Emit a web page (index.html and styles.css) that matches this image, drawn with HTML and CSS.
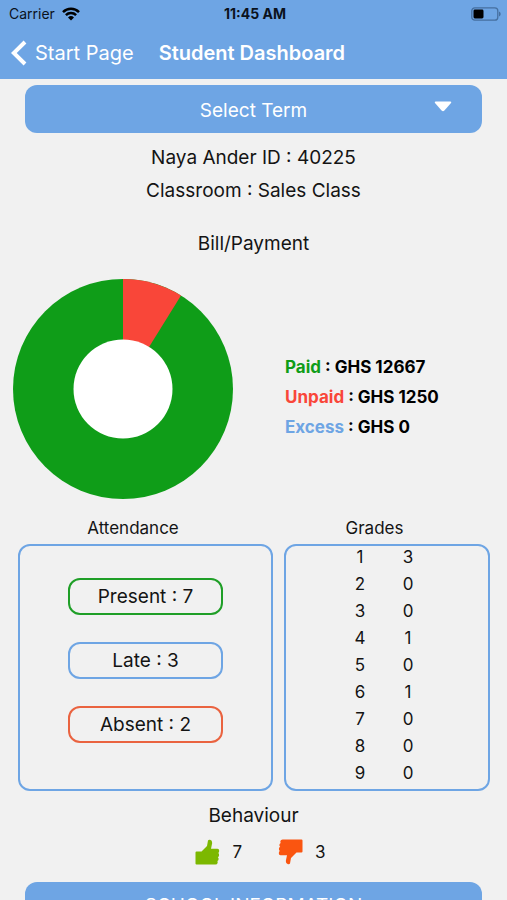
FILE: index.html
```html
<!DOCTYPE html>
<html lang="en">
<head>
<meta charset="utf-8">
<meta name="viewport" content="width=device-width, initial-scale=1">
<title>Student Dashboard</title>
<link rel="stylesheet" href="styles.css">
</head>
<body>
<div class="screen">
  <header class="top">
    <div class="status">
      <div class="carrier">
        <span>Carrier</span>
        <svg width="18" height="14" viewBox="0 0 18 14" aria-hidden="true">
          <g fill="none" stroke="#000" stroke-width="2.5">
            <path d="M1 5.1a11.3 11.3 0 0 1 16 0"/>
            <path d="M3.9 8.2a7.2 7.2 0 0 1 10.2 0"/>
          </g>
          <path d="M9 13.5 6 10.5a4.3 4.3 0 0 1 6 0z"/>
        </svg>
      </div>
      <time class="clock">11:45 AM</time>
      <svg class="battery" width="30" height="14" viewBox="0 0 30 14" aria-hidden="true">
        <rect x="0.8" y="0.8" width="26" height="12.4" rx="3" fill="none" stroke="#456f9f" stroke-width="1.3"/>
        <path d="M28 4.6c2.2.7 2.2 4.1 0 4.8z" fill="#456f9f"/>
        <rect x="2.5" y="2.6" width="10" height="8.8" rx="1.4"/>
      </svg>
    </div>
    <nav class="nav">
      <a class="back" href="#">
        <svg width="16" height="26" viewBox="0 0 16 26" aria-hidden="true"><path d="M14 2 2.8 13 14 24" fill="none" stroke="#fff" stroke-width="4"/></svg>
        <span>Start Page</span>
      </a>
      <h1 class="title">Student Dashboard</h1>
    </nav>
  </header>
  <main>
    <div class="term">
      <select class="term-select" aria-label="Select Term">
        <option>Select Term</option>
      </select>
      <svg class="caret" width="18" height="11" viewBox="0 0 18 11" aria-hidden="true"><path d="M1.600.5h14.800q1.500.3.6 1.600L10.400 9.500Q9 10.800 7.600 9.500L1 2.100Q.1.800 1.600.5z" fill="#fff"/></svg>
    </div>
    <section class="student">
      <p>Naya Ander ID : 40225</p>
      <p>Classroom : Sales Class</p>
    </section>
    <h2 class="heading">Bill/Payment</h2>
    <section class="bill">
      <svg class="donut" width="220" height="220" viewBox="0 0 220 220" role="img" aria-label="Bill payment chart">
        <circle cx="110" cy="110" r="110" fill="#0f9d18"/>
        <path d="M110 110V0a110 110 0 0 1 58 16.500z" fill="#f94639"/>
        <circle cx="110" cy="110" r="49.500" fill="#fff"/>
      </svg>
      <ul class="legend">
        <li><span class="paid">Paid</span> : GHS 12667</li>
        <li><span class="unpaid">Unpaid</span> : GHS 1250</li>
        <li><span class="excess">Excess</span> : GHS 0</li>
      </ul>
    </section>
    <div class="stats">
      <section class="stat">
        <h2 class="stat-title">Attendance</h2>
        <div class="panel attendance">
          <p class="pill present">Present : 7</p>
          <p class="pill late">Late : 3</p>
          <p class="pill absent">Absent : 2</p>
        </div>
      </section>
      <section class="stat">
        <h2 class="stat-title">Grades</h2>
        <div class="panel scores">
          <table class="grades" aria-label="Grades">
            <tbody>
              <tr><td>1</td><td>3</td></tr>
              <tr><td>2</td><td>0</td></tr>
              <tr><td>3</td><td>0</td></tr>
              <tr><td>4</td><td>1</td></tr>
              <tr><td>5</td><td>0</td></tr>
              <tr><td>6</td><td>1</td></tr>
              <tr><td>7</td><td>0</td></tr>
              <tr><td>8</td><td>0</td></tr>
              <tr><td>9</td><td>0</td></tr>
            </tbody>
          </table>
        </div>
      </section>
    </div>
    <h2 class="heading">Behaviour</h2>
    <div class="behaviour">
      <div class="vote">
        <svg width="25" height="26" viewBox="0 0 25 26" aria-hidden="true"><path d="M.5 13.500Q.5 12.500 1.500 12.500H6.500L12 7 13 1.500Q13.500.5 15 .7q2.300.4 2.200 3.300L16 9.800h6.500q1.700.2 1.700 2t-1 2.200q1 .6.900 2.200t-1.300 2q1 .6.800 2t-1.300 1.800q.6.700.3 1.900-.4 1.600-2.200 1.600H1.500q-1 0-1-1z" fill="#7cb800"/></svg>
        <span>7</span>
      </div>
      <div class="vote">
        <svg width="25" height="26" viewBox="0 0 25 26" aria-hidden="true"><path transform="rotate(180 12.500 13)" d="M.5 13.500Q.5 12.500 1.500 12.500H6.500L12 7 13 1.500Q13.500.5 15 .7q2.300.4 2.200 3.300L16 9.800h6.500q1.700.2 1.700 2t-1 2.200q1 .6.900 2.200t-1.300 2q1 .6.800 2t-1.300 1.800q.6.700.3 1.900-.4 1.600-2.200 1.600H1.500q-1 0-1-1z" fill="#fa5510"/></svg>
        <span>3</span>
      </div>
    </div>
    <button class="info" type="button">SCHOOL INFORMATION</button>
  </main>
</div>
</body>
</html>
```
FILE: styles.css
```css
* {
  box-sizing: border-box;
}

body,
h1,
h2,
p,
ul {
  margin: 0;
  padding: 0;
}

body {
  background: #f1f1f1;
  color: #141414;
  font-family: Inter, "Liberation Sans", sans-serif;
  font-size: 19px;
}

svg {
  display: block;
  flex: none;
}

.screen {
  height: 100vh;
  overflow: hidden auto;
  scrollbar-width: none;
}

.top {
  background: #6ea5e4;
}

.status {
  display: grid;
  grid-template-columns: 1fr auto 1fr;
  align-items: center;
  height: 27px;
  padding: 0 6px 0 9px;
  color: #0b121c;
  font-size: 14px;
}

.carrier {
  display: flex;
  align-items: center;
  gap: 7px;
}

.clock {
  font-weight: 700;
}

.battery {
  justify-self: end;
}

.nav {
  display: flex;
  align-items: center;
  gap: 25px;
  height: 52px;
  padding: 0 11px;
  color: #fff;
  font-size: 20px;
}

.back {
  display: flex;
  align-items: center;
  gap: 8px;
  color: inherit;
  text-decoration: none;
}

.title {
  font-size: 20px;
  font-weight: 600;
}

.term {
  position: relative;
  margin: 6px 25px 0;
}

.term-select,
.info {
  display: block;
  width: 100%;
  height: 48px;
  border: 0;
  border-radius: 12px;
  background: #6ea5e4;
  color: #fff;
  font: inherit;
}

.term-select {
  appearance: none;
  padding-top: 2px;
  text-align-last: center;
}

.caret {
  position: absolute;
  top: 16px;
  right: 30px;
  pointer-events: none;
}

.student {
  padding-top: 8px;
  line-height: 33px;
  text-align: center;
}

.heading {
  font-size: 19px;
  font-weight: 400;
  line-height: 24px;
  text-align: center;
}

.student + .heading {
  margin-top: 25px;
}

.bill {
  display: flex;
  align-items: center;
  gap: 52px;
  padding: 23px 13px 18px;
}

.legend {
  padding-top: 16px;
  color: #000;
  font-size: 17px;
  font-weight: 700;
  line-height: 30px;
  list-style: none;
}

.paid {
  color: #0f9d18;
}

.unpaid {
  color: #f94639;
}

.excess {
  color: #6ea5e4;
}

.stats {
  display: grid;
  grid-template-columns: 255fr 206fr;
  gap: 11px;
  padding: 0 17px 0 18px;
}

.stat {
  display: flex;
  flex-direction: column;
}

.stat-title {
  padding-right: 25px;
  font-size: 17px;
  font-weight: 400;
  line-height: 22px;
  text-align: center;
}

.panel {
  flex: 1;
  margin-top: 5px;
  border: 2px solid #6ea5e4;
  border-radius: 12px;
}

.attendance {
  display: flex;
  flex-direction: column;
  align-items: center;
  gap: 27px;
  padding-top: 32px;
}

.pill {
  width: 62%;
  border: 2px solid;
  border-radius: 12px;
  line-height: 33px;
  text-align: center;
}

.present {
  border-color: #1f9f27;
}

.late {
  border-color: #6ea5e4;
}

.absent {
  border-color: #ea6340;
}

.scores {
  padding-right: 6px;
}

.grades {
  margin: 0 auto;
  border-collapse: collapse;
  font-size: 17px;
  line-height: 22px;
}

.grades td {
  width: 48px;
  padding: 0 0 5px;
  text-align: center;
}

.stats + .heading {
  margin-top: 13px;
}

.behaviour {
  display: flex;
  justify-content: center;
  gap: 36px;
  padding: 11px 0 17px 14px;
  font-size: 17px;
}

.vote {
  display: flex;
  align-items: center;
  gap: 12px;
}

.info {
  width: auto;
  min-width: calc(100% - 50px);
  height: 46px;
  margin: 0 25px 24px;
}
```
